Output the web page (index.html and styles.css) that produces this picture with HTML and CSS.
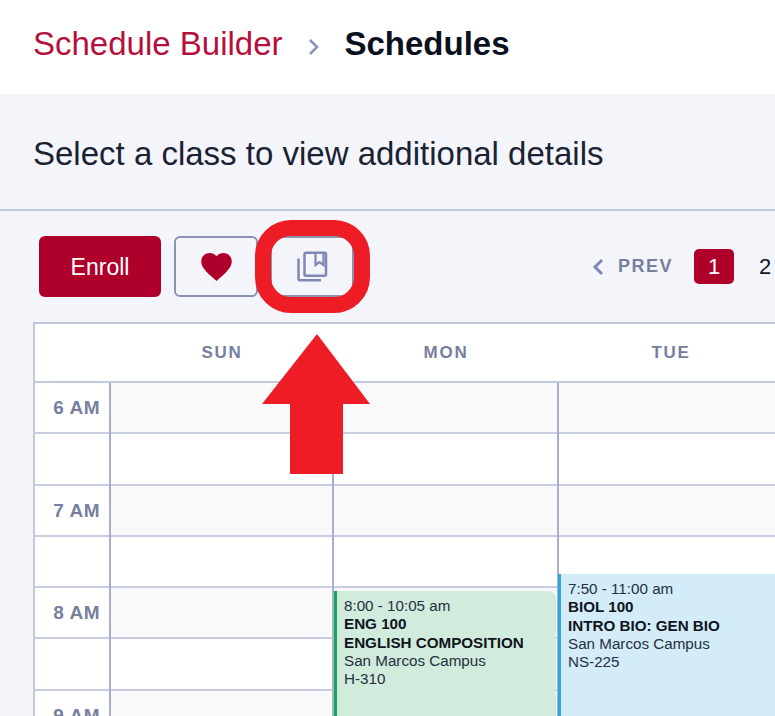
FILE: index.html
```html
<!DOCTYPE html>
<html lang="en">
<head>
  <meta charset="UTF-8" />
  <meta name="viewport" content="width=device-width, initial-scale=1.0"/>
  <title>Schedules | Schedule Builder</title>
  <link rel="stylesheet" href="styles.css">
</head>
<body>
  <div class="page">
    <header class="crumbs">
      <a class="crumb-link" href="#">Schedule Builder</a>
      <svg class="crumb-sep" width="12" height="18" viewBox="0 0 12 18"><path d="M2 2l7 7-7 7" fill="none" stroke="#8b93b8" stroke-width="2.600"/></svg>
      <h1 class="crumb-current">Schedules</h1>
    </header>

    <div class="intro">
      <p>Select a class to view additional details</p>
    </div>

    <div class="toolbar">
      <button class="btn-enroll">Enroll</button>
      <button class="btn-icon" aria-label="Favorite">
        <svg width="31" height="28" viewBox="2 3 20 18.350"><path d="M12 21.350l-1.450-1.320C5.400 15.360 2 12.280 2 8.500 2 5.420 4.420 3 7.500 3c1.740 0 3.410.810 4.500 2.090C13.090 3.810 14.760 3 16.500 3 19.580 3 22 5.420 22 8.500c0 3.780-3.400 6.860-8.550 11.540L12 21.350z" fill="#ae002b"/></svg>
      </button>
      <button class="btn-icon" aria-label="Saved schedules">
        <svg width="32" height="32" viewBox="0 0 32 32" fill="none" stroke="#7f88b5" stroke-width="2.500"><rect x="8.500" y="1.700" width="21.500" height="23" rx="1.500"/><path d="M19.500 1.700v12.300l4-3 4 3V1.700" stroke-width="2.200"/><path d="M2.500 7.500v20.300a1.500 1.500 0 0 0 1.500 1.500h21"/></svg>
      </button>
      <nav class="pager">
        <svg width="12" height="18" viewBox="0 0 12 18"><path d="M10 2 3 9l7 7" fill="none" stroke="#7f88b5" stroke-width="3"/></svg>
        <span class="pager-prev">PREV</span>
        <span class="page-num current">1</span>
        <span class="page-num">2</span>
      </nav>
    </div>

    <div class="calendar">
      <div class="day-heads">
        <div></div>
        <div class="day-head">SUN</div>
        <div class="day-head">MON</div>
        <div class="day-head">TUE</div>
      </div>
      <div class="grid">
        <div class="times">
          <div class="time">6 AM</div><div class="time"></div>
          <div class="time">7 AM</div><div class="time"></div>
          <div class="time">8 AM</div><div class="time"></div>
          <div class="time">9 AM</div>
        </div>
        <div class="day">
          <div class="slot tint"></div><div class="slot"></div>
          <div class="slot tint"></div><div class="slot"></div>
          <div class="slot tint"></div><div class="slot"></div>
          <div class="slot tint"></div>
        </div>
        <div class="day">
          <div class="slot tint"></div><div class="slot"></div>
          <div class="slot tint"></div><div class="slot"></div>
          <div class="slot tint"></div><div class="slot"></div>
          <div class="slot tint"></div>
          <div class="event event-green">
            <div>8:00 - 10:05 am</div>
            <strong>ENG 100</strong>
            <strong>ENGLISH COMPOSITION</strong>
            <div>San Marcos Campus</div>
            <div>H-310</div>
          </div>
        </div>
        <div class="day">
          <div class="slot tint"></div><div class="slot"></div>
          <div class="slot tint"></div><div class="slot"></div>
          <div class="slot tint"></div><div class="slot"></div>
          <div class="slot tint"></div>
          <div class="event event-blue">
            <div>7:50 - 11:00 am</div>
            <strong>BIOL 100</strong>
            <strong>INTRO BIO: GEN BIO</strong>
            <div>San Marcos Campus</div>
            <div>NS-225</div>
          </div>
        </div>
      </div>
    </div>

    <!-- annotation drawn on top of the screenshot -->
    <div class="ring"></div>
    <svg class="arrow" width="108" height="140" viewBox="0 0 108 140"><path d="M55 0 108 70H81v70H28V70H0z" fill="#ee1c25"/></svg>
  </div>
</body>
</html>
```

FILE: styles.css
```css
* {
  box-sizing: border-box;
}

body {
  margin: 0;
  font-family: "Liberation Sans", Arial, sans-serif;
  color: #111827;
  background: #f4f5fa;
}

.page {
  position: relative;
  width: 775px;
  height: 716px;
  overflow: hidden;
}

.crumbs {
  display: flex;
  align-items: center;
  height: 94px;
  padding-left: 33px;
  background: #fff;
}

.crumb-link {
  margin-bottom: 6px;
  font-size: 33px;
  color: #b5103c;
  text-decoration: none;
}

.crumb-sep {
  flex: none;
  margin: 0 25px;
}

.crumb-current {
  margin: 0 0 6px;
  font-size: 33px;
  font-weight: bold;
  color: #0b1020;
}

.intro {
  height: 117px;
  padding: 39px 33px 0;
  border-bottom: 2px solid #c2c8de;
}

.intro p {
  margin: 0;
  font-size: 33px;
  line-height: 42px;
  color: #1a2233;
}

.toolbar {
  display: flex;
  align-items: flex-start;
  height: 111px;
  padding: 25px 0 0 39px;
}

.btn-enroll {
  flex: none;
  width: 122px;
  height: 61px;
  margin-right: 13px;
  padding-top: 2px;
  border: none;
  border-radius: 6px;
  background: #ae002b;
  color: #fff;
  font-family: inherit;
  font-size: 23px;
}

.btn-icon {
  flex: none;
  display: flex;
  align-items: center;
  justify-content: center;
  width: 84px;
  height: 61px;
  margin-right: 12px;
  padding: 0;
  border: 2px solid #8b93b0;
  border-radius: 6px;
  background: #f4f5fa;
}

.pager {
  flex: none;
  display: flex;
  align-items: center;
  height: 61px;
  margin-left: 226px;
  white-space: nowrap;
}

.pager-prev {
  margin: 0 21px 0 14px;
  font-size: 18px;
  font-weight: bold;
  letter-spacing: 1.500px;
  color: #767f9f;
}

.page-num {
  flex: none;
  display: flex;
  align-items: center;
  justify-content: center;
  width: 40px;
  height: 35px;
  margin-right: 11px;
  border-radius: 5px;
  font-size: 22px;
  color: #111827;
}

.page-num.current {
  background: #ae002b;
  color: #fff;
}

.calendar {
  width: 760px;
  margin-left: 33px;
  border-top: 2px solid #c2c8de;
  border-left: 2px solid #c2c8de;
  background: #fff;
}

.day-heads,
.grid {
  display: grid;
  grid-template-columns: 76px 223px 225px 225px;
}

.day-heads {
  height: 59px;
  border-bottom: 2px solid #c2c8de;
}

.day-head {
  padding-right: 1px;
  font-size: 17px;
  font-weight: bold;
  letter-spacing: 1.700px;
  line-height: 57px;
  text-align: center;
  color: #767f9f;
}

.times {
  border-right: 2px solid #a9b0cd;
}

.time,
.slot {
  height: 51.300px;
  border-bottom: 2px solid #c8cde1;
}

.time {
  padding-right: 9px;
  font-size: 19px;
  font-weight: bold;
  letter-spacing: 0.500px;
  line-height: 49px;
  text-align: right;
  color: #767f9f;
}

.day {
  position: relative;
  border-right: 2px solid #a9b0cd;
}

.slot.tint {
  background: #f9f9fc;
}

.event {
  position: absolute;
  padding: 6px 7px;
  font-size: 15.200px;
  line-height: 18.300px;
  color: #26303f;
  overflow: hidden;
}

.event strong {
  display: block;
  color: #0f1420;
}

.event-green {
  top: 208px;
  left: 0;
  right: 1px;
  height: 300px;
  border-left: 3px solid #18a558;
  border-top-right-radius: 8px;
  background: #d1ebdc;
}

.event-blue {
  top: 191px;
  left: -1px;
  right: 0;
  height: 300px;
  border-left: 3px solid #2ba6dc;
  background: #d3ecf7;
}

.ring {
  position: absolute;
  left: 255px;
  top: 220px;
  width: 115px;
  height: 93px;
  border: 16px solid #ee1c25;
  border-radius: 36px;
}

.arrow {
  position: absolute;
  left: 262px;
  top: 334px;
}
```
